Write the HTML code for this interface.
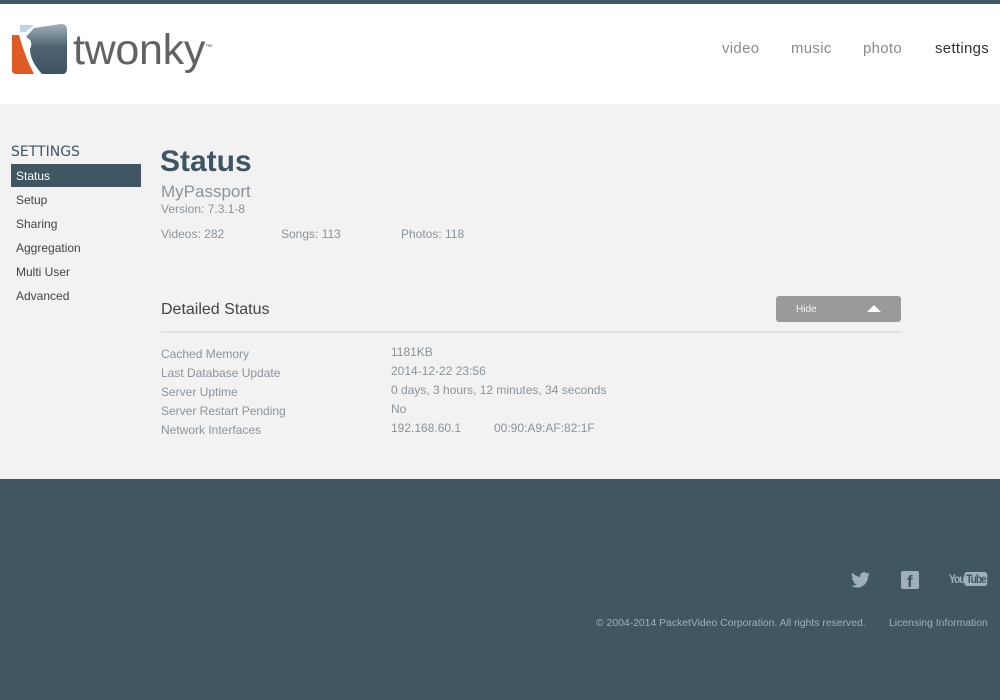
<!DOCTYPE html>
<html><head><meta charset="utf-8"><style>
*{margin:0;padding:0;box-sizing:border-box}
body{width:1000px;height:700px;overflow:hidden;font-family:"Liberation Sans",sans-serif;background:#f2f2f2;position:relative}
.abs{position:absolute}
.top{left:0;top:0;width:1000px;height:4px;background:#415663}
.hdr{left:0;top:4px;width:1000px;height:100px;background:#fff}
.nav{top:36px;font-size:15px;color:#8a8a8a;letter-spacing:.3px}
.side{left:11px;font-size:12px;color:#444}
.lbl{left:161px;font-size:12px;color:#8b949b}
.val{left:391px;font-size:12px;color:#8b949b}
.foot{left:0;top:479px;width:1000px;height:221px;background:#415663}
</style></head><body>
<div class="abs top"></div>
<div class="abs hdr">
<svg class="abs" style="left:12px;top:19px" width="55" height="52" viewBox="0 0 55 52">
<defs><linearGradient id="g" x1="0" y1="0" x2="0" y2="1"><stop offset="0" stop-color="#9fb0bb"/><stop offset=".45" stop-color="#4e6472"/><stop offset="1" stop-color="#3c5361"/></linearGradient></defs>
<path d="M8 2 L22 2 L14 9 L8 9Z" fill="#b8d6e6"/>
<path d="M0 12 L7 12 Q13 34 22 51 L4 51 Q0 51 0 47Z" fill="#e05a26"/>
<path d="M22 5 L49 1 Q55 1 55 6 L55 46 Q55 51 50 51 L30 51 Q18 38 18 26 Q22 18 14 14 Z" fill="url(#g)"/>
</svg>
<div class="abs" style="left:73px;top:21px;font-size:43px;color:#626262;letter-spacing:-0.3px;line-height:50px">twonky<span style="font-size:7px;vertical-align:top;position:relative;top:-2px">™</span></div>
<div class="abs nav" style="left:722px">video</div>
<div class="abs nav" style="left:791px">music</div>
<div class="abs nav" style="left:863px">photo</div>
<div class="abs nav" style="left:935px;color:#333">settings</div>
</div>
<div class="abs" style="left:11px;top:144px;font-size:14px;color:#415663;font-family:'DejaVu Sans',sans-serif">SETTINGS</div>
<div class="abs" style="left:11px;top:164px;width:130px;height:23px;background:#415663"></div>
<div class="abs side" style="top:169px;left:16px;color:#fff">Status</div>
<div class="abs side" style="top:193px;left:16px">Setup</div>
<div class="abs side" style="top:217px;left:16px">Sharing</div>
<div class="abs side" style="top:241px;left:16px">Aggregation</div>
<div class="abs side" style="top:265px;left:16px">Multi User</div>
<div class="abs side" style="top:289px;left:16px">Advanced</div>
<div class="abs" style="left:160px;top:145px;font-size:30px;font-weight:bold;color:#3e5563">Status</div>
<div class="abs" style="left:161px;top:182px;font-size:17px;color:#8b949b">MyPassport</div>
<div class="abs lbl" style="top:202px">Version: 7.3.1-8</div>
<div class="abs lbl" style="top:227px">Videos: 282</div>
<div class="abs lbl" style="top:227px;left:281px">Songs: 113</div>
<div class="abs lbl" style="top:227px;left:401px">Photos: 118</div>
<div class="abs" style="left:161px;top:301px;font-size:16px;color:#444">Detailed Status</div>
<div class="abs" style="left:776px;top:296px;width:125px;height:26px;background:#9a9a9a;border-radius:3px"></div>
<div class="abs" style="left:796px;top:304px;font-size:10px;color:#f2f2f2">Hide</div>
<div class="abs" style="left:867px;top:305px;width:0;height:0;border-left:7px solid transparent;border-right:7px solid transparent;border-bottom:7px solid #fff"></div>
<div class="abs" style="left:161px;top:331px;width:740px;height:2px;background:#e2e2e2"></div>
<div class="abs lbl" style="top:347px">Cached Memory</div>
<div class="abs lbl" style="top:366px">Last Database Update</div>
<div class="abs lbl" style="top:385px">Server Uptime</div>
<div class="abs lbl" style="top:404px">Server Restart Pending</div>
<div class="abs lbl" style="top:423px">Network Interfaces</div>
<div class="abs val" style="top:345px">1181KB</div>
<div class="abs val" style="top:364px">2014-12-22 23:56</div>
<div class="abs val" style="top:383px">0 days, 3 hours, 12 minutes, 34 seconds</div>
<div class="abs val" style="top:402px">No</div>
<div class="abs val" style="top:421px">192.168.60.1</div>
<div class="abs val" style="top:421px;left:494px">00:90:A9:AF:82:1F</div>
<div class="abs foot"></div>
<svg class="abs" style="left:851px;top:572px" width="19" height="16" viewBox="0 0 24 20"><path d="M24 2.4a10 10 0 0 1-2.8.8A5 5 0 0 0 23.3.5a10 10 0 0 1-3.1 1.2A4.9 4.9 0 0 0 11.8 6 14 14 0 0 1 1.7.9a4.9 4.9 0 0 0 1.5 6.6A4.9 4.9 0 0 1 1 6.9a4.9 4.9 0 0 0 3.9 4.8 4.9 4.9 0 0 1-2.2.1 4.9 4.9 0 0 0 4.6 3.4A9.9 9.9 0 0 1 0 17.3 14 14 0 0 0 7.5 19.5c9.1 0 14-7.5 14-14v-.6A10 10 0 0 0 24 2.4z" fill="#9fb0ba"/></svg>
<div class="abs" style="left:901px;top:571px;width:18px;height:18px;background:#9fb0ba;border-radius:2px;overflow:hidden"><span style="position:absolute;left:6px;top:1px;font:bold 17px 'Liberation Sans';color:#415663">f</span></div>
<div class="abs" style="left:949px;top:572px;font:bold 12px 'Liberation Sans';color:#9fb0ba;letter-spacing:-1.2px;transform:scaleX(.85);transform-origin:left">You<span style="background:#9fb0ba;color:#415663;border-radius:3px;padding:0 2px">Tube</span></div>
<div class="abs" style="left:596px;top:618px;font-size:10.4px;color:#9fb0ba">© 2004-2014 PacketVideo Corporation. All rights reserved.</div>
<div class="abs" style="left:889px;top:618px;font-size:10.4px;color:#9fb0ba">Licensing Information</div>
</body></html>
